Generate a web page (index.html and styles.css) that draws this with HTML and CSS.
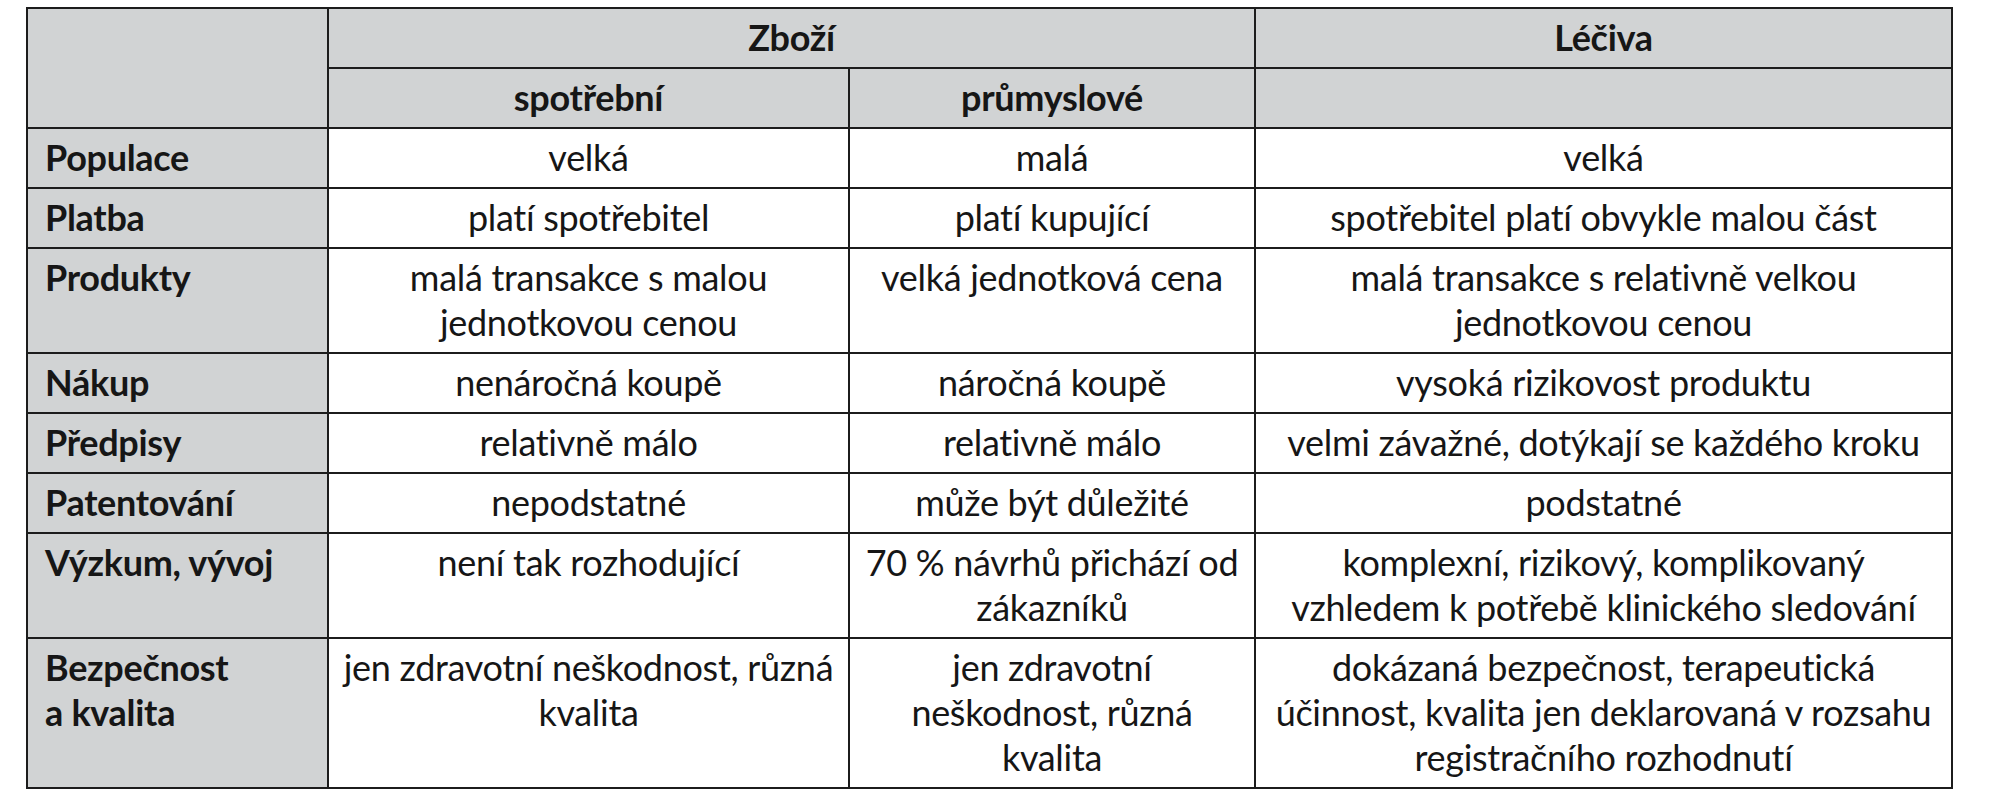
FILE: index.html
```html
<!DOCTYPE html>
<html lang="cs">
<head>
<meta charset="utf-8">
<title>Zboží a léčiva</title>
<link rel="stylesheet" href="styles.css">
</head>
<body>
<div class="page">
<table class="cmp">
<colgroup>
<col class="c-label">
<col class="c-cons">
<col class="c-ind">
<col class="c-drug">
</colgroup>
<thead>
<tr>
<th class="corner" rowspan="2"></th>
<th colspan="2">Zboží</th>
<th>Léčiva</th>
</tr>
<tr>
<th>spotřební</th>
<th>průmyslové</th>
<th></th>
</tr>
</thead>
<tbody>
<tr>
<th class="label">Populace</th>
<td>velká</td>
<td>malá</td>
<td>velká</td>
</tr>
<tr>
<th class="label">Platba</th>
<td>platí spotřebitel</td>
<td>platí kupující</td>
<td>spotřebitel platí obvykle malou část</td>
</tr>
<tr>
<th class="label">Produkty</th>
<td>malá transakce s malou<br>jednotkovou cenou</td>
<td>velká jednotková cena</td>
<td>malá transakce s relativně velkou<br>jednotkovou cenou</td>
</tr>
<tr>
<th class="label">Nákup</th>
<td>nenáročná koupě</td>
<td>náročná koupě</td>
<td>vysoká rizikovost produktu</td>
</tr>
<tr>
<th class="label">Předpisy</th>
<td>relativně málo</td>
<td>relativně málo</td>
<td>velmi závažné, dotýkají se každého kroku</td>
</tr>
<tr>
<th class="label">Patentování</th>
<td>nepodstatné</td>
<td>může být důležité</td>
<td>podstatné</td>
</tr>
<tr>
<th class="label">Výzkum, vývoj</th>
<td>není tak rozhodující</td>
<td>70 % návrhů přichází od<br>zákazníků</td>
<td>komplexní, rizikový, komplikovaný<br>vzhledem k potřebě klinického sledování</td>
</tr>
<tr>
<th class="label">Bezpečnost<br>a kvalita</th>
<td>jen zdravotní neškodnost, různá<br>kvalita</td>
<td>jen zdravotní<br>neškodnost, různá<br>kvalita</td>
<td>dokázaná bezpečnost, terapeutická<br>účinnost, kvalita jen deklarovaná v rozsahu<br>registračního rozhodnutí</td>
</tr>
</tbody>
</table>
</div>
</body>
</html>
```

FILE: styles.css
```css
html, body {
  margin: 0;
  padding: 0;
  background: #ffffff;
}

.page {
  padding: 7px 0 0 26px;
}

.cmp {
  border-collapse: collapse;
  table-layout: fixed;
  width: 1925px;
  font-family: Lato, "Open Sans", "Liberation Sans", sans-serif;
  font-size: 36px;
  line-height: 45px;
  letter-spacing: -0.3px;
  color: #161616;
}

.c-label { width: 301px; }
.c-cons { width: 521px; }
.c-ind { width: 406px; }
.c-drug { width: 697px; }

.cmp th,
.cmp td {
  border: 2px solid #1c1c1c;
  padding: 6px 0 7px 0;
  vertical-align: top;
  text-align: center;
  white-space: nowrap;
}

.cmp thead th {
  background: #d1d3d4;
  font-weight: 700;
}

.cmp th.label {
  background: #d1d3d4;
  font-weight: 700;
  text-align: left;
  padding-left: 17px;
}

.cmp td {
  background: #ffffff;
  font-weight: 400;
}
```
